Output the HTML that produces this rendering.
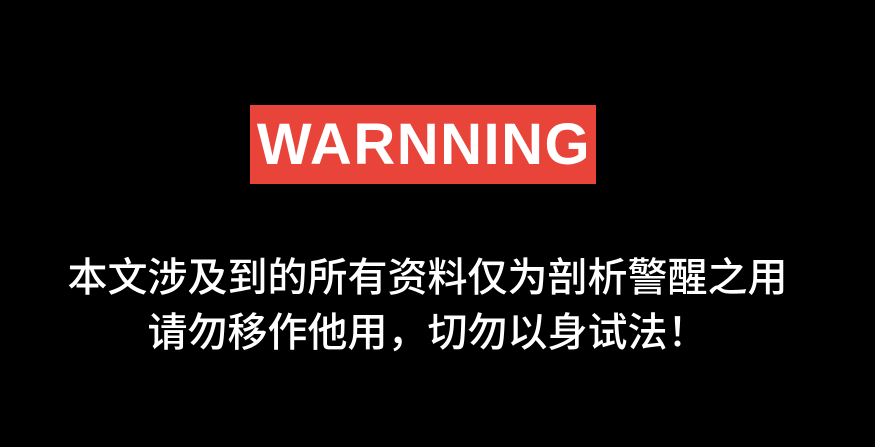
<!DOCTYPE html>
<html><head><meta charset="utf-8"><style>
html,body{margin:0;padding:0;background:#000;width:875px;height:447px;overflow:hidden}
.box{position:absolute;left:250px;top:105px;width:346px;height:79px;background:#e8443a}
.w{position:absolute;left:250px;top:111px;width:348px;height:79px;line-height:81px;text-align:center;color:#fff;font:bold 58px "Liberation Sans",Arial,sans-serif;letter-spacing:1.5px}
.t{position:absolute;left:0;width:855px;text-align:center;color:#fff;font-family:"Liberation Sans","Noto Sans CJK SC",sans-serif;font-size:40px;line-height:44px;font-weight:500}
</style></head><body>
<div class="box"></div>
<div class="w">WARNNING</div>
<div class="t" style="top:256px">本文涉及到的所有资料仅为剖析警醒之用</div>
<div class="t" style="top:311px">请勿移作他用，切勿以身试法！</div>
</body></html>
